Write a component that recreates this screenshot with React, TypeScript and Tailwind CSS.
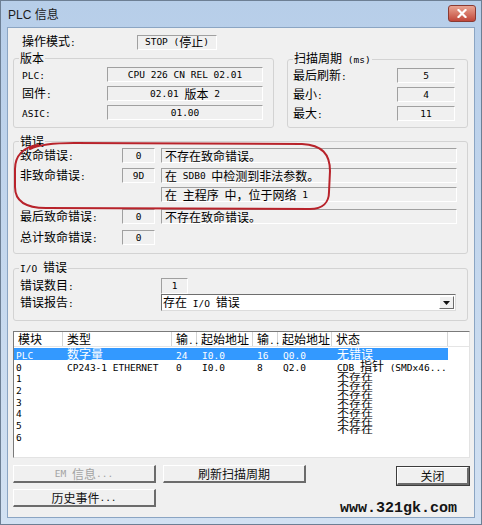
import clsx from "clsx";
import type { ReactNode } from "react";

const CJK = /[\u3000-\u9fff\uff00-\uffef]/;

// split a label into CJK runs and latin runs, latin gets the narrow mono face
function Mixed({ text }: { text: string }) {
  const parts = text.split(/([\u3000-\u9fff\uff00-\uffef]+)/).filter(Boolean);
  return (
    <>
      {parts.map((p, i) =>
        CJK.test(p) ? (
          <span key={i}>{p}</span>
        ) : (
          <span key={i} className="font-['DejaVu_Sans_Mono',monospace] text-[9.5px] whitespace-pre">
            {p}
          </span>
        )
      )}
    </>
  );
}

function Field({ text, className, left }: { text: string; className?: string; left?: boolean }) {
  return (
    <div
      className={clsx(
        "flex items-center h-[15px] border border-t-[#a0a0a0] border-l-[#a0a0a0] border-b-white border-r-white whitespace-nowrap",
        left ? "justify-start pl-[3px]" : "justify-center",
        className
      )}
    >
      <Mixed text={text} />
    </div>
  );
}

function Group({ title, className, children }: { title: string; className?: string; children: ReactNode }) {
  return (
    <fieldset className={clsx("border border-[#d3d3d3] rounded-[3px] px-[5px]", className)}>
      <legend className="px-[1px] leading-[14px]">
        <Mixed text={title} />
      </legend>
      {children}
    </fieldset>
  );
}

function Btn({
  children,
  className,
  disabled,
  primary,
}: {
  children: ReactNode;
  className?: string;
  disabled?: boolean;
  primary?: boolean;
}) {
  return (
    <div
      className={clsx(
        "flex items-center justify-center h-[18px] border-t border-l border-t-white border-l-white border-b-2 border-r-2 border-b-[#6b6b6b] border-r-[#6b6b6b]",
        primary && "outline outline-1 outline-[#3c3c3c]",
        disabled ? "text-[#a3a3a3]" : "text-[#111]",
        className
      )}
    >
      {children}
    </div>
  );
}

const cols = [
  { w: "w-[49px]", head: "模块", cells: ["PLC", "0", "1", "2", "3", "4", "5", "6"], pl: "pl-[2px]" },
  { w: "w-[109px]", head: "类型", cells: ["数字量", "CP243-1 ETHERNET"], pl: "pl-[4px]" },
  { w: "w-[25px]", head: "输..", cells: ["24", "0"], pl: "pl-[4px]" },
  { w: "w-[56px]", head: "起始地址", cells: ["I0.0", "I0.0"], pl: "pl-[5px]" },
  { w: "w-[25px]", head: "输..", cells: ["16", "8"], pl: "pl-[4px]" },
  { w: "w-[54px]", head: "起始地址", cells: ["Q0.0", "Q2.0"], pl: "pl-[5px]" },
];

const status = ["不存在", "不存在", "不存在", "不存在", "不存在", "不存在", "不存在"];

function ModuleTable() {
  return (
    <div className="mt-[10px] ml-[5px] w-[457px] h-[127px] border border-t-[#7a7a7a] border-l-[#7a7a7a] border-b-[#e3e3e3] border-r-[#e3e3e3] bg-white">
      <div className="flex h-[15px] border-b border-[#e5e5e5] leading-[14px]">
        {cols.map((c, i) => (
          <div key={i} className={clsx(c.w, "pl-[4px] border-r border-[#d5d5d5] whitespace-nowrap")}>
            <Mixed text={c.head} />
          </div>
        ))}
        <div className="w-[116px] pl-[4px] border-r border-[#d5d5d5]">状态</div>
        <div className="flex-1" />
      </div>
      <div className="flex mt-[1px] leading-[11.7px]">
        {cols.map((c, i) => (
          <div key={i} className={clsx(c.w, "flex flex-col")}>
            {c.cells.map((t, j) => (
              <div
                key={j}
                className={clsx("h-[11.7px] whitespace-nowrap", c.pl, j === 0 && "bg-[#3399ff] text-white")}
              >
                <Mixed text={t} />
              </div>
            ))}
          </div>
        ))}
        <div className="w-[116px] flex flex-col">
          <div className="h-[11.7px] pl-[5px] bg-[#3399ff] text-white">无错误</div>
          <div className="h-[11.7px] pl-[5px] whitespace-nowrap">
            <Mixed text="CDB 指针 (SMDx46..." />
          </div>
          {/* these rows are squeezed in the original dialog */}
          <div className="flex flex-col mt-[1px] origin-top-left scale-y-[0.74]">
            {status.map((s, j) => (
              <div key={j} className="h-[12px] leading-[12px] pl-[5px]">
                {s}
              </div>
            ))}
          </div>
        </div>
      </div>
    </div>
  );
}

export default function App() {
  return (
    <div className="w-[482px] h-[525px] border border-[#6d7f94] bg-gradient-to-b from-[#b7cee9] to-[#d2e1f2] px-[6px] pb-[6px] flex flex-col font-['Noto_Sans_CJK_SC',sans-serif] text-[12px] text-black">
      {/* title bar */}
      <div className="h-[26px] flex justify-between items-start -mx-[6px]">
        <div className="ml-[7px] mt-[7px] leading-[14px] font-['Liberation_Sans','Noto_Sans_CJK_SC',sans-serif] text-[#1b1b1b]">
          PLC 信息
        </div>
        <div className="mt-[4px] mr-[5px] w-[28px] h-[17px] rounded-[3px] border border-[#8a3a32] bg-gradient-to-b from-[#e9a493] to-[#c0463a] flex items-center justify-center">
          <svg width="10" height="9" viewBox="0 0 10 9">
            <path d="M1.5 1 L8.5 8 M8.5 1 L1.5 8" stroke="white" strokeWidth="2.2" strokeLinecap="square" />
          </svg>
        </div>
      </div>

      {/* client area */}
      <div className="relative w-[468px] h-[491px] border border-[#8ba5c3] bg-[#f0f0f0] leading-[14px]">
        <div className="flex items-center mt-[7px] h-[14px]">
          <span className="ml-[14px] w-[115px]">
            <Mixed text="操作模式:" />
          </span>
          <Field text="STOP (停止)" className="w-[80px] h-[14px]" />
        </div>

        <div className="flex mt-[2px] ml-[5px] gap-[13px]">
          <Group title="版本" className="w-[261px] h-[77px]">
            <div className="flex flex-col gap-[4px] mt-[2px] ml-[3px]">
              {[
                ["PLC:", "CPU 226 CN REL 02.01"],
                ["固件:", "02.01 版本 2"],
                ["ASIC:", "01.00"],
              ].map(([l, v]) => (
                <div key={l} className="flex items-center h-[15px]">
                  <span className="w-[85px]">
                    <Mixed text={l} />
                  </span>
                  <Field text={v} className="w-[156px]" />
                </div>
              ))}
            </div>
          </Group>
          <Group title="扫描周期 (ms)" className="w-[181px] h-[77px]">
            <div className="flex flex-col gap-[4px] mt-[1px]">
              {[
                ["最后刷新:", "5"],
                ["最小:", "4"],
                ["最大:", "11"],
              ].map(([l, v]) => (
                <div key={l} className="flex items-center h-[15px]">
                  <span className="w-[104px]">
                    <Mixed text={l} />
                  </span>
                  <Field text={v} className="w-[58px]" />
                </div>
              ))}
            </div>
          </Group>
        </div>

        <Group title="错误" className="mt-[6px] ml-[5px] w-[455px] h-[120px]">
          <div className="flex items-center h-[15px]">
            <span className="ml-[1px] w-[102px]">
              <Mixed text="致命错误:" />
            </span>
            <Field text="0" className="w-[33px]" />
            <Field text="不存在致命错误。" left className="ml-[6px] w-[296px]" />
          </div>
          <div className="flex items-center h-[15px] mt-[5px]">
            <span className="ml-[1px] w-[102px]">
              <Mixed text="非致命错误:" />
            </span>
            <Field text="9D" className="w-[33px]" />
            <Field text="在 SDB0 中检测到非法参数。" left className="ml-[6px] w-[296px]" />
          </div>
          <div className="flex items-center h-[15px] mt-[4px]">
            <span className="ml-[1px] w-[102px]" />
            <span className="w-[33px]" />
            <Field text="在 主程序 中，位于网络 1" left className="ml-[6px] w-[296px]" />
          </div>
          <div className="flex items-center h-[15px] mt-[7px]">
            <span className="ml-[1px] w-[102px]">
              <Mixed text="最后致命错误:" />
            </span>
            <Field text="0" className="w-[33px]" />
            <Field text="不存在致命错误。" left className="ml-[6px] w-[296px]" />
          </div>
          <div className="flex items-center h-[15px] mt-[6px]">
            <span className="ml-[1px] w-[102px]">
              <Mixed text="总计致命错误:" />
            </span>
            <Field text="0" className="w-[33px]" />
          </div>
        </Group>

        <Group title="I/O 错误" className="mt-[6px] ml-[5px] w-[455px] h-[61px]">
          <div className="flex items-center h-[16px] mt-[2px]">
            <span className="ml-[1px] w-[141px]">
              <Mixed text="错误数目:" />
            </span>
            <Field text="1" className="w-[27px] h-[16px]" />
          </div>
          <div className="flex items-center h-[17px]">
            <span className="ml-[1px] w-[141px]">
              <Mixed text="错误报告:" />
            </span>
            <div className="w-[295px] h-[17px] flex items-center bg-white border border-t-[#6e6e6e] border-l-[#6e6e6e] border-b-[#dcdcdc] border-r-[#dcdcdc]">
              <span className="flex-1 pl-[1px] whitespace-nowrap">
                <Mixed text="存在 I/O 错误" />
              </span>
              <div className="w-[15px] h-[13px] mr-[1px] flex items-center justify-center bg-[#f0f0f0] border-t border-l border-t-white border-l-white border-b border-r border-b-[#6b6b6b] border-r-[#6b6b6b]">
                <svg width="7" height="4" viewBox="0 0 7 4">
                  <path d="M0 0 H7 L3.5 4 Z" fill="#111" />
                </svg>
              </div>
            </div>
          </div>
        </Group>

        <ModuleTable />

        <div className="flex items-start mt-[7px] ml-[5px]">
          <Btn disabled className="w-[143px]">
            <Mixed text="EM 信息..." />
          </Btn>
          <Btn className="ml-[7px] w-[143px]">刷新扫描周期</Btn>
          <Btn primary className="ml-[91px] mt-[2px] w-[72px]">
            关闭
          </Btn>
        </div>
        <div className="flex items-start mt-[4px] ml-[5px]">
          <Btn className="w-[143px] h-[17px]">
            <Mixed text="历史事件..." />
          </Btn>
          <div className="ml-[184px] mt-[13px] font-['Liberation_Mono',monospace] font-bold text-[15px] leading-[14px] text-[#151515]">
            www.321gk.com
          </div>
        </div>

        {/* red hand-drawn annotation over the error rows */}
        <svg className="absolute left-[4px] top-[112px]" width="324" height="74" viewBox="0 0 324 74" fill="none">
          <path
            d="M26 5 C11 7 3 16 3 29 L3 47 C3 62 14 68 34 68 L298 69 C311 69 317 62 317 52 L318 31 C318 14 310 5 290 4 L62 3 C42 3 28 4 18 9"
            stroke="#b8232b"
            strokeWidth="2"
            strokeLinecap="round"
          />
        </svg>
      </div>
    </div>
  );
}
